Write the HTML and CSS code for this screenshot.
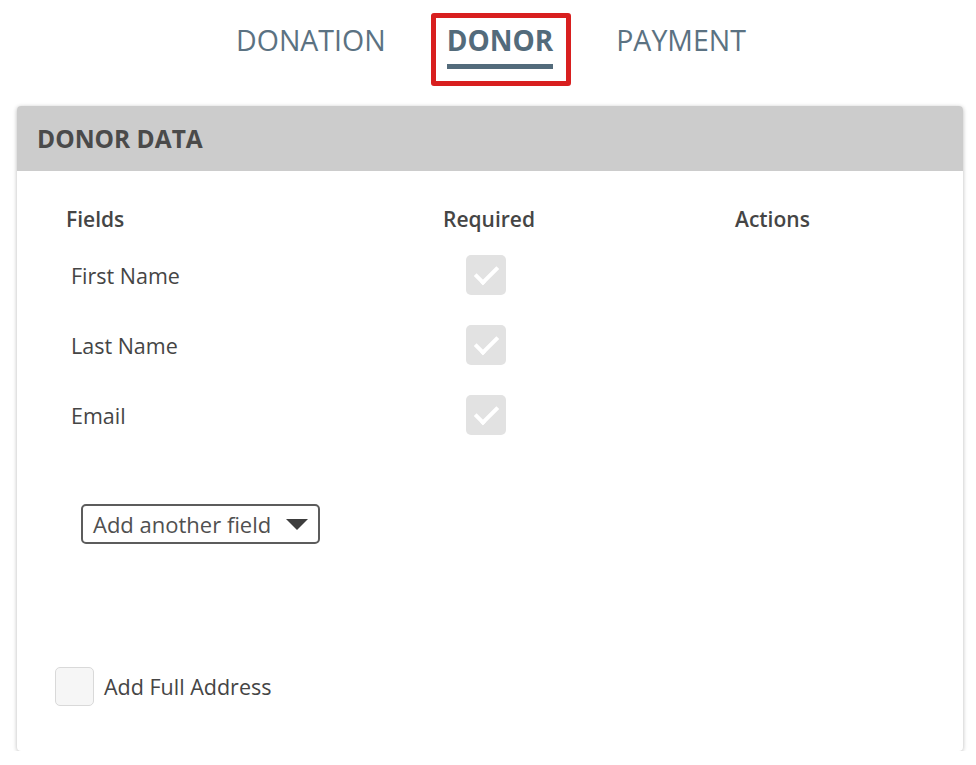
FILE: index.html
```html
<!DOCTYPE html>
<html lang="en">
<head>
    <meta charset="UTF-8">
    <meta name="viewport" content="width=device-width, initial-scale=1.0">
    <title>Donor</title>
    <link rel="stylesheet" href="styles.css">
</head>
<body>

    <nav class="steps">
        <a class="step" href="#">DONATION</a>
        <a class="step step-active" href="#"><span>DONOR</span></a>
        <a class="step" href="#">PAYMENT</a>
    </nav>

    <section class="card">
        <div class="card-header">DONOR DATA</div>
        <div class="card-body">
            <div class="field-table">
                <div class="th">Fields</div>
                <div class="th">Required</div>
                <div class="th">Actions</div>

                <div class="td name">First Name</div>
                <div class="td"><span class="check check-on"></span></div>
                <div class="td"></div>

                <div class="td name">Last Name</div>
                <div class="td"><span class="check check-on"></span></div>
                <div class="td"></div>

                <div class="td name">Email</div>
                <div class="td"><span class="check check-on"></span></div>
                <div class="td"></div>
            </div>

            <button class="add-field">Add another field <span class="caret"></span></button>

            <label class="full-address">
                <span class="check check-off"></span>
                Add Full Address
            </label>
        </div>
    </section>

</body>
</html>
```

FILE: styles.css
```css
:root {
    --tab-color: #5b7282;
    --tab-active: #536b7b;
    --highlight: #d81f1f;
    --text-color: #454545;
    --header-bg: #cccccc;
    --check-bg: #e2e2e2;
}

body {
    font-family: 'Open Sans', 'Liberation Sans', sans-serif;
    background-color: #ffffff;
    color: var(--text-color);
    margin: 0;
}

.steps {
    display: flex;
    justify-content: center;
    align-items: flex-start;
    gap: 45px;
    padding-top: 13px;
    height: 73px;
    margin-left: 6px;
}

.step {
    font-size: 28.5px;
    color: var(--tab-color);
    text-decoration: none;
    line-height: 38px;
    padding-top: 8px;
}

.step-active {
    border: 5px solid var(--highlight);
    border-radius: 3px;
    padding: 3px 13px 12px 11px;
    font-size: 28px;
    font-weight: bold;
    color: var(--tab-active);
}

.step-active span {
    display: block;
    border-bottom: 5px solid var(--tab-active);
    padding-bottom: 5px;
}

.card {
    margin: 20px 0 0 17px;
    width: 946px;
    border-radius: 4px;
    background: #fff;
    box-shadow: 0 1px 4px rgba(0, 0, 0, 0.28);
    overflow: hidden;
}

.card-header {
    background-color: var(--header-bg);
    height: 65px;
    line-height: 66px;
    padding-left: 20px;
    font-size: 24.5px;
    font-weight: bold;
    color: #4a4a4a;
}

.card-body {
    padding: 28px 0 45px 0;
}

.field-table {
    display: grid;
    grid-template-columns: 377px 292px 1fr;
    grid-template-rows: 41px repeat(3, 70px);
    margin-left: 49px;
}

.th {
    font-size: 21px;
    font-weight: 600;
    line-height: 41px;
}

.td {
    display: flex;
    align-items: center;
    font-size: 21.5px;
}

.name {
    padding-left: 5px;
}

.check {
    display: inline-block;
    width: 40px;
    height: 40px;
    border-radius: 5px;
    box-sizing: border-box;
    position: relative;
}

.check-on {
    background-color: var(--check-bg);
    margin-left: 23px;
}

.check-on::after {
    content: "";
    position: absolute;
    left: 14px;
    top: 6px;
    width: 9px;
    height: 19px;
    border: solid #fff;
    border-width: 0 4px 4px 0;
    transform: rotate(45deg);
}

.check-off {
    background-color: #f6f6f6;
    border: 1px solid #d9d9d9;
    width: 39px;
    height: 39px;
}

.add-field {
    display: flex;
    align-items: center;
    margin: 54px 0 0 64px;
    height: 40px;
    width: 239px;
    padding: 0 10px;
    border: 2px solid #5c5c5c;
    border-radius: 5px;
    background: #fff;
    font-family: inherit;
    font-size: 22px;
    color: #505050;
    cursor: pointer;
}

.caret {
    margin-left: auto;
    width: 0;
    height: 0;
    border-left: 11px solid transparent;
    border-right: 11px solid transparent;
    border-top: 11px solid #3d3d3d;
}

.full-address {
    display: flex;
    align-items: center;
    gap: 10px;
    margin: 123px 0 0 38px;
    font-size: 21.5px;
}
```
